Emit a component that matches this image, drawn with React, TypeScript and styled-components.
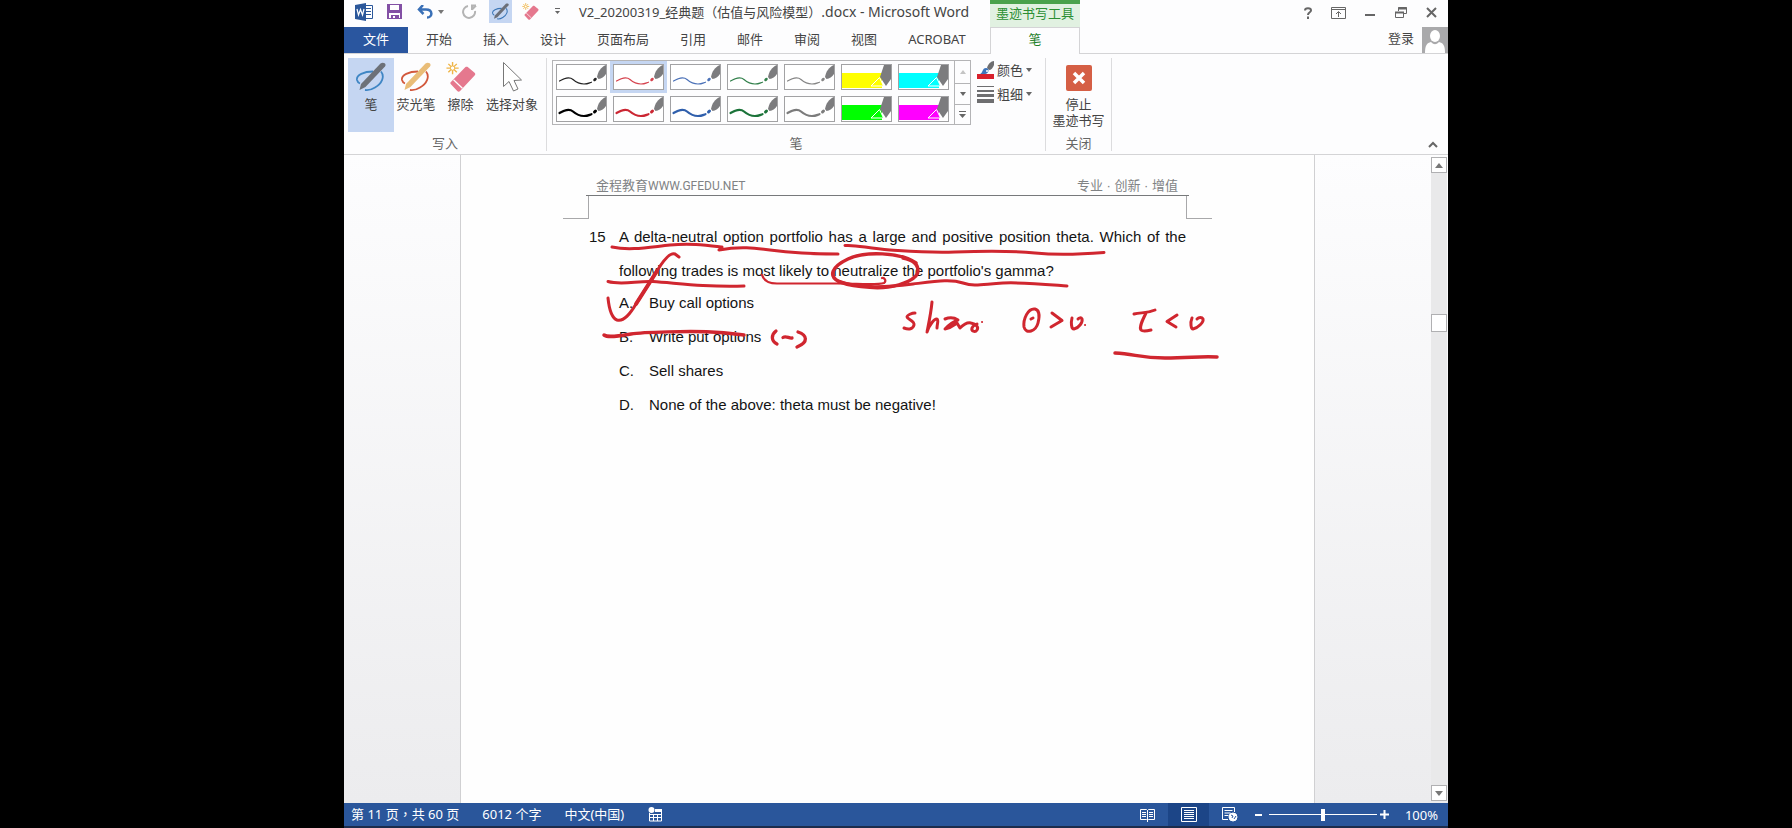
import React from 'react';
import styled, { createGlobalStyle } from 'styled-components';

const Global = createGlobalStyle`
  *, *::before, *::after { box-sizing: border-box; }
  html, body { margin: 0; background: #000; }
  body, button, input { font: 13px/18px "Noto Sans", "Noto Sans CJK SC", sans-serif; color: #444; }
  button { padding: 0; border: 0; background: none; }
  svg { display: block; flex: none; }
`;

const Screen = styled.div`
  min-height: 100vh;
  padding: 0 344px;
  display: flex;
  flex-direction: column;
`;

const Window = styled.div`
  flex: 1;
  display: flex;
  flex-direction: column;
  background: #fdfdfe;
`;

const Header = styled.header`
  display: grid;
  grid-template-columns: 646px 90px 1fr;
  grid-template-rows: 27px 27px;
`;

const TitleBar = styled.div`
  display: flex;
  align-items: flex-start;
  height: 23px;
  padding-left: 4px;
`;

const QuickButton = styled.button<{ $w: number; $on?: boolean }>`
  width: ${p => p.$w}px;
  height: 23px;
  display: flex;
  align-items: center;
  justify-content: center;
  background: ${p => (p.$on ? '#c5d6f2' : 'transparent')};
`;

const Title = styled.h1`
  flex: 1;
  margin: 0 0 0 14px;
  padding-top: 3px;
  font-size: 13px;
  line-height: 18px;
  font-weight: 400;
  white-space: nowrap;
`;

const AppName = styled.span`
  font-size: 14px;
`;

const Punctuation = styled.span`
  font-family: "Noto Sans CJK TC", sans-serif;
  line-height: 1;
`;

const ContextLabel = styled.div`
  border-top: 4px solid #4aa24c;
  background: #e1f1e1;
  color: #2c8f34;
  line-height: 18px;
  text-align: center;
`;

const WindowControls = styled.div`
  display: flex;
  justify-content: flex-end;
  padding-right: 1px;
`;

const ControlButton = styled.button`
  width: 31px;
  height: 25px;
  display: flex;
  align-items: center;
  justify-content: center;
`;

const CollapseButton = styled(ControlButton)`
  height: 14px;
`;

const Tabs = styled.nav`
  display: flex;
  border-bottom: 1px solid #d4d4d6;
`;

const FileTab = styled.button`
  width: 64px;
  height: 26px;
  padding-bottom: 2px;
  margin-right: 3px;
  background: #2a569f;
  color: #fff;
`;

const Tab = styled.button`
  height: 26px;
  padding: 0 16px 2px 15px;
  white-space: nowrap;
`;

const ActiveTab = styled.button`
  padding-bottom: 4px;
  border: solid #d4d4d6;
  border-width: 1px 1px 0;
  color: #1f7f2a;
`;

const SignIn = styled.div`
  display: flex;
  justify-content: flex-end;
  align-items: flex-start;
  gap: 8px;
  border-bottom: 1px solid #d4d4d6;
`;

const SignInButton = styled.button`
  height: 24px;
  padding-bottom: 2px;
`;

const Ribbon = styled.section`
  display: flex;
  height: 101px;
  padding: 4px 0 3px;
  border-bottom: 1px solid #d4d4d6;
`;

const Group = styled.div<{ $w: number }>`
  width: ${p => p.$w}px;
  display: flex;
  flex-direction: column;
  justify-content: space-between;
  border-right: 1px solid #dcdcde;
`;

const GroupBody = styled.div<{ $pad: number }>`
  display: flex;
  padding-left: ${p => p.$pad}px;
`;

const GroupName = styled.div`
  text-align: center;
  color: #666;
  line-height: 16px;
`;

const BigButton = styled.button<{ $w: number; $on?: boolean }>`
  width: ${p => p.$w}px;
  height: 74px;
  padding-top: 4px;
  display: flex;
  flex-direction: column;
  align-items: center;
  gap: 4px;
  line-height: 16px;
  white-space: nowrap;
  background: ${p => (p.$on ? '#c5d6f2' : 'transparent')};
`;

const Gallery = styled.div`
  display: flex;
  height: 65px;
  margin-top: 2px;
  border: 1px solid #b4b4b6;
`;

const Swatches = styled.div`
  display: grid;
  grid-template-columns: repeat(7, 57px);
  grid-template-rows: 32px 31px;
  margin-right: 2px;
`;

const Swatch = styled.button<{ $on?: boolean }>`
  padding: 3px;
  background: ${p => (p.$on ? '#c5d6f2' : 'transparent')};
`;

const Steps = styled.div`
  display: grid;
  grid-template-rows: 22px 21px 20px;
  width: 16px;
  border-left: 1px solid #b4b4b6;
`;

const Step = styled.button`
  display: flex;
  align-items: center;
  justify-content: center;
  & + & { border-top: 1px solid #b4b4b6; }
`;

const SideButtons = styled.div`
  display: flex;
  flex-direction: column;
  padding-left: 6px;
`;

const SideButton = styled.button`
  display: flex;
  align-items: center;
  gap: 3px;
  height: 24px;
  white-space: nowrap;
`;

const RibbonEnd = styled.div`
  flex: 1;
  display: flex;
  justify-content: flex-end;
  align-items: flex-end;
`;

const Workspace = styled.main`
  flex: 1;
  display: flex;
  min-height: 300px;
  background: linear-gradient(#fdfdfe, #ececee);
`;

const Pasteboard = styled.div`
  flex: 1;
  display: flex;
  justify-content: center;
`;

const Page = styled.article`
  position: relative;
  width: 855px;
  border: solid #d0d0d2;
  border-width: 0 1px;
  background: #fefefe;
`;

const PageHeader = styled.div`
  display: flex;
  justify-content: space-between;
  margin: 20px 125px 0;
  padding: 0 11px 0 10px;
  height: 21px;
  border-bottom: 1px solid #77797b;
  color: #808284;
  font-family: "Liberation Sans", "Noto Sans CJK SC", sans-serif;
  line-height: 21px;
`;

const SiteAddress = styled.span`
  font-family: Roboto, sans-serif;
  font-size: 12px;
`;

const Margins = styled.div`
  display: flex;
  justify-content: space-between;
  margin: 0 102px;
`;

const Corner = styled.div<{ $side: 'left' | 'right' }>`
  width: 26px;
  height: 23px;
  border-bottom: 1px solid #a8a8aa;
  border-${p => (p.$side === 'left' ? 'right' : 'left')}: 1px solid #a8a8aa;
`;

const Content = styled.div`
  margin: 1px 128px 0;
  color: #141414;
  font-family: "Liberation Sans", sans-serif;
  font-size: 15px;
  line-height: 34px;
`;

const Question = styled.div`
  display: grid;
  grid-template-columns: 30px 1fr;
`;

const Prompt = styled.p`
  margin: 0;
  text-align: justify;
`;

const Options = styled.ol`
  margin: -2px 0 0;
  padding: 0 0 0 30px;
  list-style: none;
`;

const Option = styled.li`
  display: grid;
  grid-template-columns: 30px 1fr;
`;

const Ink = styled.svg`
  position: absolute;
  left: 0;
  top: 0;
  fill: none;
  stroke: #d0262f;
  stroke-linecap: round;
  stroke-linejoin: round;
`;

const ScrollBar = styled.div`
  width: 17px;
  display: flex;
  flex-direction: column;
  padding: 2px 1px 2px 0;
`;

const ScrollBox = styled.button<{ $h?: number }>`
  width: 16px;
  height: ${p => p.$h ?? 16}px;
  display: flex;
  align-items: center;
  justify-content: center;
  border: 1px solid #b0b0b2;
  background: #fff;
`;

const Track = styled.div<{ $grow: number }>`
  flex: ${p => p.$grow} 1 0;
  background: #e9e9ea;
`;

const StatusBar = styled.footer`
  display: flex;
  align-items: stretch;
  height: 25px;
  padding: 0 10px 0 7px;
  background: #2a569b;
  border-bottom: 2px solid #1c2c4c;
  color: #fff;
`;

const StatusText = styled.span`
  margin-right: 23px;
  line-height: 23px;
  white-space: nowrap;
`;

const StatusButton = styled.button<{ $on?: boolean; $w: number }>`
  width: ${p => p.$w}px;
  display: flex;
  align-items: center;
  justify-content: center;
  background: ${p => (p.$on ? '#1c4587' : 'transparent')};
`;

const ZoomLevel = styled.button`
  width: 49px;
  color: #fff;
  text-align: right;
`;

const Spacer = styled.div`
  flex: 1;
`;

const ZoomSlider = styled.input`
  appearance: none;
  width: 108px;
  height: 23px;
  margin: 0 3px;
  background: linear-gradient(#fff, #fff) center / 100% 1px no-repeat;
  &::-webkit-slider-thumb {
    appearance: none;
    width: 4px;
    height: 12px;
    background: #fff;
  }
`;

const Caret = ({ color = '#666' }: { color?: string }) => (
  <svg width="6" height="4"><path d="M0 0h6L3 4z" fill={color} /></svg>
);

const PenIcon = ({ size, pen, loop }: { size: number; pen: string; loop: string }) => (
  <svg width={size} height={size} viewBox="0 0 30 30" fill="none">
    <path d="M17 9.500C8 9.500 0 13 1 18c.5 2 1.500 3 3 3.500M25 9.500c4 5 1 12-6 16-4 2.500-7 3-10 2.500" stroke={loop} strokeWidth="1.800" />
    <path d="M3.500 28l1.500-6L24.500 1.500c2.500-2 6.500 0 4.500 3L9.500 25z" fill={pen} />
  </svg>
);

const EraserIcon = ({ size }: { size: number }) => (
  <svg width={size} height={size} viewBox="0 0 32 32">
    <path d="M5 23.500c-.5-1-.5-1.500 0-2L20.500 5.500c1-.7 2-.7 3 0l7 6c1 1 1 2 0 3L15 31c-1 1-2 1-3 0z" fill="#e5788e" />
    <path d="M8 19l9.500 9" stroke="#fff" strokeWidth="1.300" />
    <path d="M7 0v13M.5 6.500h13M2.500 2l9 9M11.500 2l-9 9" stroke="#efb548" strokeWidth="1.500" />
    <circle cx="7" cy="6.500" r="2.300" fill="#fff" stroke="#efb548" />
  </svg>
);

const strokes = [
  { name: '黑色细笔', color: '#222', width: 1 },
  { name: '红色细笔', color: '#d5434e', width: 1 },
  { name: '蓝色细笔', color: '#4c72b8', width: 1 },
  { name: '绿色细笔', color: '#32804b', width: 1 },
  { name: '灰色细笔', color: '#858585', width: 1 },
  { name: '黄色荧光笔', color: '#ff0', width: 0 },
  { name: '青色荧光笔', color: '#0ff', width: 0 },
  { name: '黑色粗笔', color: '#000', width: 2 },
  { name: '红色粗笔', color: '#cb2733', width: 2 },
  { name: '蓝色粗笔', color: '#2f5fac', width: 2 },
  { name: '绿色粗笔', color: '#1b7339', width: 2 },
  { name: '灰色粗笔', color: '#7c7c7c', width: 2 },
  { name: '绿色荧光笔', color: '#0f0', width: 0 },
  { name: '洋红荧光笔', color: '#f0f', width: 0 },
];

const PenPreview = ({ color, width }: { color: string; width: number }) => (
  <svg width="51" height="26">
    <rect x=".5" y=".5" width="50" height="25" fill="#fff" stroke="#a2a2a4" />
    {width ? (
      <g fill="none">
        <path d="M3.500 17C8 14.500 13 12 17 15.500S24 20 28 20s5-1 7.500-1.800" stroke={color} strokeWidth={width === 2 ? 2.200 : 1.200} strokeLinecap="round" />
        <path d="M38.500 16l1-1" stroke={color} strokeWidth={width === 2 ? 3 : 2.500} strokeLinecap="round" />
        <path d="M50 1v9c-2 3-4.500 4.500-7.500 5L41 13C42 7.500 45 3 50 1z" fill="#7c7c7e" />
      </g>
    ) : (
      <g>
        <path d="M1 9h40v15H1z" fill={color} />
        <path d="M43 1h7v14l-5 7-6-9z" fill="#7c7c7e" />
        <path d="M30 22l8.500-8.500 4 8.500z" fill={color} stroke="#fff" />
      </g>
    )}
  </svg>
);

const options = ['Buy call options', 'Write put options', 'Sell shares', 'None of the above: theta must be negative!'];

const Annotations = () => (
  <Ink width="853" height="300" aria-hidden="true">
    <g transform="translate(-461 -155)" strokeWidth="3">
      <path d="M612 247C630 251 650 247 670 245S705 245 722 247L719 250C740 246 755 248 770 250S810 254 838 254" />
      <path d="M845 245.500c12-1 22 3 45 4.500s40 3 65 2 60-1 80 1 50 1 69-.5" />
      <path d="M608 281.500c14 4 30-1 45 0s32 3 50 4 30 1 41 .5" />
      <path d="M762 275c2 6 7 8.500 15 8.500h60c20 0 40 2 47-.5 3-2 0-6-2-5" strokeWidth="2.200" />
      <path d="M916 263C900 252 865 251 848 259S829 276 838 281s36 8 50 6 30-8 30-16-6-11-15-13" strokeWidth="3.500" />
      <path d="M838 281c22 8 50 6 75 3s38-5 50-1 20 1 40 0 50 2 64 3" />
      <path d="M608 298c1 10 4 20 9 22 7 2 13-6 19-16l21-33c6-10 13-19 18-17l4 3" />
      <path d="M636 304l21-33" strokeWidth="4" />
      <path d="M604 335c4 3 15 1 27-1s60-3 80-2 22 2 33 3" strokeWidth="3.500" />
      <path d="M776 331c-5 4-5 10 1 13M783 337.500c3-2 6 1 9 .5M798 332c9 3 11 10-1 15" strokeWidth="3.300" />
      <path d="M915 313c-3 0-8 2-8 4s8 4 7 8-5 5-10 3M932 302c-1 11-3 20-5 30 2-7 8-14 10-13s0 5 0 9M945 319c5-2 10-1 13 1-6 2-11 7-13 9 6-1 9-4 12-6l3 5c4-4 7-6 11-5 5 1 8 4 6 7s-6 1-5-2 3-3 5-4" />
      <path d="M1035 309c-7-1-12 10-11 18 2 8 12 4 14-4s1-13-3-14M1031 319l2-1M1052 313l10 7.500-11 6.500M1072 318c-1 4-1 11 2 11 5-1 9-7 8-10-1-2-3-1-4 0" />
      <path d="M1134 314c7-2 12 0 21-4M1146 313c-4 8-7 14-5 17 2 2 6 1 10 0M1177 315l-10 6.500 9 5.500M1192 318c-2 5-1 11 1 11 5-1 11-7 10-10-1-2-4-2-6 0" />
      <path d="M1115 353c20 1 25 5 50 5s35-2 52-1" strokeWidth="3.500" />
      <path d="M982 322h.1M1085 325h.1" strokeWidth="2" />
    </g>
  </Ink>
);

export default function App() {
  return (
    <Screen>
      <Global />
      <Window>
        <Header>
          <TitleBar>
            <QuickButton $w={31} aria-label="Word">
              <svg width="18" height="18">
                <path d="M8 2.500h9.500v13H8z" fill="#fff" stroke="#2b579a" />
                <path d="M11 5.500h5M11 8.500h5M11 11.500h5" stroke="#2b579a" />
                <path d="M0 2l11-2v18L0 16z" fill="#2b579a" />
                <path d="M2 6l1.500 6L5.500 6.500 7.500 12 9 6" fill="none" stroke="#fff" strokeWidth="1.200" />
              </svg>
            </QuickButton>
            <QuickButton $w={31} aria-label="保存">
              <svg width="15" height="15">
                <path d="M0 0h15v15H0z" fill="#8350a5" />
                <path d="M3 1h9v5H3zM2 9h11v5h-1v-3H4v3H2zM6 12h2v2H6z" fill="#fff" />
              </svg>
            </QuickButton>
            <QuickButton $w={40} aria-label="撤消">
              <svg width="16" height="14" fill="none" stroke="#3a70b7" strokeWidth="2.500"><path d="M6 0L2 4.500 6.500 9M2 4.500h7c7 0 7 8 1 8" /></svg>
              <svg width="11" height="4"><path d="M5 0h6L8 4z" fill="#777" /></svg>
            </QuickButton>
            <QuickButton $w={39} aria-label="重复">
              <svg width="16" height="15" fill="none" stroke="#b4b4b4" strokeWidth="2"><path d="M9 1.500h5M10 1v5M10 5.500l4-4M6 2a6 6 0 107 5" /></svg>
            </QuickButton>
            <QuickButton $w={23} $on aria-label="笔"><PenIcon size={17} pen="#6b6f78" loop="#3a75b5" /></QuickButton>
            <QuickButton $w={37} aria-label="橡皮擦"><EraserIcon size={17} /></QuickButton>
            <QuickButton $w={16} aria-label="自定义快速访问工具栏">
              <svg width="7" height="7"><path d="M1 .5h5" stroke="#666" /><path d="M1 3h5L3.500 6z" fill="#666" /></svg>
            </QuickButton>
            <Title>
              V2_20200319_经典题<Punctuation>（</Punctuation>估值与风险模型<Punctuation>）</Punctuation><AppName>.docx - Microsoft Word</AppName>
            </Title>
          </TitleBar>
          <ContextLabel>墨迹书写工具</ContextLabel>
          <WindowControls>
            <ControlButton aria-label="帮助">
              <svg width="10" height="12" fill="none" stroke="#666" strokeWidth="2"><path d="M2 3.500C2 .5 8 .5 8 3.500 8 5.500 5 5 5 8M5 9.500V12" /></svg>
            </ControlButton>
            <ControlButton aria-label="功能区显示选项">
              <svg width="15" height="12" fill="none" stroke="#666"><path d="M.5.500h14v11H.500zM.500 2.500h14M7.500 10V5M5 7l2.500-2.500L10 7" /></svg>
            </ControlButton>
            <ControlButton aria-label="最小化">
              <svg width="10" height="12"><path d="M0 7h10v2H0z" fill="#666" /></svg>
            </ControlButton>
            <ControlButton aria-label="向下还原">
              <svg width="12" height="12" fill="none" stroke="#666"><path d="M3.500 4V.500h8v6H9" /><path d="M3 1.500h9M0 5.500h9" strokeWidth="2" /><path d="M.5 5v5.500h8V5" /></svg>
            </ControlButton>
            <ControlButton aria-label="关闭">
              <svg width="11" height="11" stroke="#666" strokeWidth="2"><path d="M1 1l9 9M10 1l-9 9" /></svg>
            </ControlButton>
          </WindowControls>
          <Tabs>
            <FileTab>文件</FileTab>
            {['开始', '插入', '设计', '页面布局', '引用', '邮件', '审阅', '视图', 'ACROBAT'].map(t => <Tab key={t}>{t}</Tab>)}
          </Tabs>
          <ActiveTab>笔</ActiveTab>
          <SignIn>
            <SignInButton>登录</SignInButton>
            <svg width="26" height="26">
              <path d="M0 0h26v26H0z" fill="#a9a9ab" />
              <ellipse cx="13" cy="9" rx="5" ry="6" fill="#fff" />
              <path d="M3 26c0-8 2-10 6-11 3 3 5 3 8 0 4 1 6 3 6 11z" fill="#fff" />
            </svg>
          </SignIn>
        </Header>

        <Ribbon>
          <Group $w={203}>
            <GroupBody $pad={4}>
              <BigButton $w={46} $on><PenIcon size={30} pen="#6d7178" loop="#3f86c4" />笔</BigButton>
              <BigButton $w={44}><PenIcon size={30} pen="#e9bd78" loop="#d2583c" />荧光笔</BigButton>
              <BigButton $w={45}><EraserIcon size={30} />擦除</BigButton>
              <BigButton $w={58}>
                <svg width="22" height="30"><path d="M2.500.500v24l5.500-5 4.500 9.500 4.500-2-4-8.500 7.500-.5z" fill="#fff" stroke="#777" /></svg>
                选择对象
              </BigButton>
            </GroupBody>
            <GroupName>写入</GroupName>
          </Group>
          <Group $w={499}>
            <GroupBody $pad={5}>
              <Gallery>
                <Swatches>
                  {strokes.map((s, i) => (
                    <Swatch key={s.name} $on={i === 1} aria-label={s.name}><PenPreview color={s.color} width={s.width} /></Swatch>
                  ))}
                </Swatches>
                <Steps>
                  <Step aria-label="上一行"><svg width="6" height="4"><path d="M0 4h6L3 0z" fill="#c4c4c4" /></svg></Step>
                  <Step aria-label="下一行"><Caret /></Step>
                  <Step aria-label="其他"><svg width="7" height="7"><path d="M0 .5h7" stroke="#666" /><path d="M0 3h7L3.500 7z" fill="#666" /></svg></Step>
                </Steps>
              </Gallery>
              <SideButtons>
                <SideButton>
                  <svg width="17" height="18">
                    <path d="M0 13h17v5H0z" fill="#d8202c" />
                    <path d="M10 7c1-4 4-7 7-7v4c-1 3-3 5-5 5z" fill="#6e6e70" />
                    <path d="M3 13c3-1 2-6 6-6 4 0 3 6-1 6z" fill="#3e74bb" />
                    <circle cx="10" cy="10" r="1" fill="#fff" />
                  </svg>
                  颜色 <Caret />
                </SideButton>
                <SideButton>
                  <svg width="17" height="17"><path d="M0 0h17v1H0zM0 4h17v2H0zM0 8h17v3H0zM0 13h17v4H0z" fill="#6e6e70" /></svg>
                  粗细 <Caret />
                </SideButton>
              </SideButtons>
            </GroupBody>
            <GroupName>笔</GroupName>
          </Group>
          <Group $w={66}>
            <GroupBody $pad={0}>
              <BigButton $w={65}>
                <svg width="26" height="30">
                  <rect y="3" width="26" height="26" rx="2" fill="#d55f45" />
                  <path d="M8 11l10 10M18 11L8 21" stroke="#fff" strokeWidth="3.500" />
                </svg>
                <span>停止<br />墨迹书写</span>
              </BigButton>
            </GroupBody>
            <GroupName>关闭</GroupName>
          </Group>
          <RibbonEnd>
            <CollapseButton aria-label="折叠功能区">
              <svg width="10" height="7" fill="none" stroke="#666" strokeWidth="2"><path d="M1 6l4-4 4 4" /></svg>
            </CollapseButton>
          </RibbonEnd>
        </Ribbon>

        <Workspace>
          <Pasteboard>
            <Page>
              <PageHeader><span>金程教育<SiteAddress>WWW.GFEDU.NET</SiteAddress></span><span>专业 · 创新 · 增值</span></PageHeader>
              <Margins><Corner $side="left" /><Corner $side="right" /></Margins>
              <Content>
                <Question>
                  <span>15</span>
                  <Prompt>A delta-neutral option portfolio has a large and positive position theta. Which of the following trades is most likely to neutralize the portfolio's gamma?</Prompt>
                </Question>
                <Options>
                  {options.map((o, i) => <Option key={o}><span>{'ABCD'[i]}.</span><span>{o}</span></Option>)}
                </Options>
              </Content>
              <Annotations />
            </Page>
          </Pasteboard>
          <ScrollBar>
            <ScrollBox aria-label="向上滚动"><svg width="8" height="5"><path d="M0 5h8L4 0z" fill="#777" /></svg></ScrollBox>
            <Track $grow={141} />
            <ScrollBox $h={18} aria-label="滚动滑块" />
            <Track $grow={453} />
            <ScrollBox aria-label="向下滚动"><svg width="8" height="5"><path d="M0 0h8L4 5z" fill="#777" /></svg></ScrollBox>
          </ScrollBar>
        </Workspace>

        <StatusBar>
          <StatusText>第 11 页<Punctuation>，</Punctuation>共 60 页</StatusText>
          <StatusText>6012 个字</StatusText>
          <StatusText>中文(中国)</StatusText>
          <StatusButton $w={16} aria-label="宏录制">
            <svg width="15" height="15">
              <path d="M1.500 6v8h12V2.500H7M2 7.500h11M2 10.500h11M5.500 7v7M9.500 7v7" fill="none" stroke="#fff" />
              <path d="M7 2h7v3H7z" fill="#fff" /><circle cx="3.500" cy="3" r="3" fill="#fff" />
            </svg>
          </StatusButton>
          <Spacer />
          <StatusButton $w={41} aria-label="阅读视图">
            <svg width="15" height="14" fill="none" stroke="#fff"><path d="M.500 1.500h6l1 1 1-1h6v10h-6l-1 1-1-1h-6zM7.500 2v12M2 4.500h4M2 6.500h4M2 8.500h4M9 4.500h4M9 6.500h4M9 8.500h4" /></svg>
          </StatusButton>
          <StatusButton $w={41} $on aria-label="页面视图">
            <svg width="16" height="15" fill="none" stroke="#fff"><path d="M.5.500h15v14H.500zM3 3.500h10M3 5.500h10M3 7.500h10M3 9.500h10M3 11.500h10" /></svg>
          </StatusButton>
          <StatusButton $w={41} aria-label="Web 版式视图">
            <svg width="16" height="15" fill="none" stroke="#fff"><path d="M6 12.500H.500V.500h12V5M2.500 3.500h8M2.500 6h6M2.500 8.500h4" /><circle cx="11" cy="10" r="4" fill="#fff" /><path d="M9 8l2 1-1 2M12 12l2-3" stroke="#2a569b" /></svg>
          </StatusButton>
          <StatusButton $w={16} aria-label="缩小"><svg width="7" height="2"><path d="M0 0h7v2H0z" fill="#fff" /></svg></StatusButton>
          <ZoomSlider type="range" aria-label="缩放" min="0" max="100" defaultValue="50" />
          <StatusButton $w={9} aria-label="放大"><svg width="9" height="9"><path d="M0 3.500h9v2H0zM3.500 0h2v9h-2z" fill="#fff" /></svg></StatusButton>
          <ZoomLevel>100%</ZoomLevel>
        </StatusBar>
      </Window>
    </Screen>
  );
}
